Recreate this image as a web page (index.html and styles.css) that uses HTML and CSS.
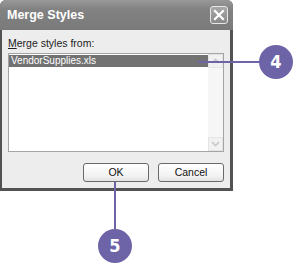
FILE: index.html
```html
<!DOCTYPE html>
<html lang="en">
<head>
    <meta charset="UTF-8">
    <title>Merge Styles</title>
    <link rel="stylesheet" href="styles.css">
</head>
<body>
    <div class="page">
        <div class="dialog">
            <div class="titlebar">
                <span class="title">Merge Styles</span>
                <div class="close-btn">
                    <svg width="12" height="12" viewBox="0 0 12 12">
                        <path d="M2 2 L10 10 M10 2 L2 10" stroke="#fff" stroke-width="2.2" stroke-linecap="square"/>
                    </svg>
                </div>
            </div>
            <div class="client">
                <div class="label"><u>M</u>erge styles from:</div>
                <div class="listbox">
                    <div class="items">
                        <div class="item selected">VendorSupplies.xls</div>
                    </div>
                    <div class="scrollbar">
                        <div class="scroll-btn">
                            <svg width="9" height="6" viewBox="0 0 9 6"><path d="M1 5 L4.5 1.5 L8 5" fill="none" stroke="#c8c8c8" stroke-width="1.6"/></svg>
                        </div>
                        <div class="scroll-track"></div>
                        <div class="scroll-btn">
                            <svg width="9" height="6" viewBox="0 0 9 6"><path d="M1 1 L4.5 4.5 L8 1" fill="none" stroke="#c8c8c8" stroke-width="1.6"/></svg>
                        </div>
                    </div>
                </div>
                <div class="buttons">
                    <div class="btn">OK</div>
                    <div class="btn">Cancel</div>
                </div>
            </div>
        </div>

        <!-- callouts -->
        <div class="leader leader-4"></div>
        <div class="callout callout-4">4</div>
        <div class="leader leader-5"></div>
        <div class="callout callout-5">5</div>
    </div>
</body>
</html>
```

FILE: styles.css
```css
body {
    margin: 0;
    background-color: #fff;
    font-family: "Liberation Sans", Arial, sans-serif;
}
.page {
    position: relative;
    width: 300px;
    height: 267px;
    overflow: hidden;
}
.dialog {
    width: 233px;
    height: 191px;
    box-sizing: border-box;
    display: flex;
    flex-direction: column;
    background-color: #525252;
    padding: 0 3px 3px 2px;
    border-radius: 6px 6px 0 0;
}
.titlebar {
    height: 30px;
    margin: 0 -3px 0 -2px;
    padding: 0 5px 0 7px;
    display: flex;
    align-items: center;
    justify-content: space-between;
    background: linear-gradient(#999, #828282 30%, #7a7a7a);
    border-radius: 6px 6px 0 0;
}
.title {
    color: #fff;
    font-weight: bold;
    font-size: 12.5px;
}
.close-btn {
    width: 18px;
    height: 18px;
    box-sizing: border-box;
    border: 1px solid #e6e6e6;
    border-radius: 3px;
    background: linear-gradient(#a8a8a8, #8a8a8a);
    display: flex;
    align-items: center;
    justify-content: center;
}
.client {
    flex: 1;
    background-color: #ededed;
    padding: 7px 6px 0 6px;
    display: flex;
    flex-direction: column;
}
.label {
    font-size: 10.5px;
    line-height: 13px;
    color: #222;
}
.listbox {
    margin-top: 3px;
    height: 99px;
    box-sizing: border-box;
    border: 1px solid #a4a4a4;
    background-color: #fff;
    display: flex;
}
.items {
    flex: 1;
    padding-top: 1px;
}
.item {
    font-size: 10px;
    line-height: 12px;
    padding-left: 2px;
    color: #222;
}
.item.selected {
    background-color: #727272;
    color: #fff;
}
.scrollbar {
    width: 15px;
    display: flex;
    flex-direction: column;
    background-color: #f6f6f6;
}
.scroll-btn {
    height: 14px;
    box-sizing: border-box;
    border: 1px solid #e4e4e4;
    background-color: #f1f1f1;
    display: flex;
    align-items: center;
    justify-content: center;
}
.scroll-track {
    flex: 1;
}
.buttons {
    margin-top: 11px;
    display: flex;
    justify-content: flex-end;
    gap: 9px;
}
.btn {
    width: 66px;
    height: 19px;
    box-sizing: border-box;
    border: 1px solid #6a6a6a;
    border-radius: 3px;
    background: linear-gradient(#ffffff, #f2f2f2 70%, #e2e2e2);
    font-size: 10.5px;
    line-height: 17px;
    text-align: center;
    color: #111;
}
.leader {
    position: absolute;
    background-color: #6d63a7;
}
.leader-4 {
    left: 198px;
    top: 61px;
    width: 64px;
    height: 2px;
}
.leader-5 {
    left: 114px;
    top: 182px;
    width: 2px;
    height: 50px;
}
.callout {
    position: absolute;
    width: 34px;
    height: 34px;
    border-radius: 50%;
    background-color: #6d63a7;
    color: #fff;
    font-family: "DejaVu Sans Condensed", "DejaVu Sans", sans-serif;
    font-weight: bold;
    font-size: 18px;
    line-height: 34px;
    text-align: center;
}
.callout-4 {
    left: 259px;
    top: 45px;
}
.callout-5 {
    left: 98px;
    top: 229px;
}
```
